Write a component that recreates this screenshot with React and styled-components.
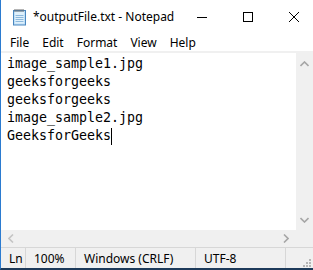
import React from 'react';
import styled, { createGlobalStyle } from 'styled-components';

const lines = [
  'image_sample1.jpg',
  'geeksforgeeks',
  'geeksforgeeks',
  'image_sample2.jpg',
  'GeeksforGeeks'
];

const menus = ['File', 'Edit', 'Format', 'View', 'Help'];

const statusCells = [
  { label: 'Ln', width: 25 },
  { label: '100%', width: 50 },
  { label: 'Windows (CRLF)', width: 120 },
  { label: 'UTF-8', width: 90 }
];

const NotepadIcon = () => (
  <svg width="16" height="18" viewBox="0 0 16 18">
    <rect x="1.5" y="2.5" width="12" height="14.5" fill="#bfe0f7" stroke="#4a87c0" />
    <rect x="3" y="4" width="9" height="11.5" fill="#dff0fb" />
    <path d="M3.5 7.5h8M3.5 9.5h8M3.5 11.5h8M3.5 13.5h8" stroke="#8cb8dc" />
    <path d="M3 1v3M5 1v3M7 1v3M9 1v3M11 1v3" stroke="#6a6a6a" />
  </svg>
);

const App = () => (
  <Window>
    <GlobalStyle />
    <TitleBar>
      <NotepadIcon />
      <Title>*outputFile.txt - Notepad</Title>
      <Controls>
        <CtrlButton>
          <svg width="10" height="10" viewBox="0 0 10 10">
            <path d="M0 5.5h10" stroke="#000" />
          </svg>
        </CtrlButton>
        <CtrlButton>
          <svg width="10" height="10" viewBox="0 0 10 10">
            <rect x="0.5" y="0.5" width="9" height="9" fill="none" stroke="#000" />
          </svg>
        </CtrlButton>
        <CtrlButton>
          <svg width="10" height="10" viewBox="0 0 10 10">
            <path d="M0 0L10 10M10 0L0 10" stroke="#000" />
          </svg>
        </CtrlButton>
      </Controls>
    </TitleBar>
    <MenuBar>
      {menus.map(m => <MenuItem key={m}>{m}</MenuItem>)}
    </MenuBar>
    <EditorFrame>
      <EditorRow>
        <TextArea>
          {lines.map((line, i) => (
            <Line key={i}>
              {line}
              {i === lines.length - 1 && <Caret />}
            </Line>
          ))}
        </TextArea>
        <VScroll>
          <Arrow>
            <svg width="9" height="6" viewBox="0 0 9 6">
              <path d="M0.5 5L4.5 1L8.5 5" stroke="#a6a6a6" strokeWidth="1.6" fill="none" />
            </svg>
          </Arrow>
          <Arrow>
            <svg width="9" height="6" viewBox="0 0 9 6">
              <path d="M0.5 1L4.5 5L8.5 1" stroke="#a6a6a6" strokeWidth="1.6" fill="none" />
            </svg>
          </Arrow>
        </VScroll>
      </EditorRow>
      <HScroll>
        <HArrow>
          <svg width="6" height="9" viewBox="0 0 6 9">
            <path d="M5 0.5L1 4.5L5 8.5" stroke="#c4c4c4" strokeWidth="1.6" fill="none" />
          </svg>
        </HArrow>
        <HArrow>
          <svg width="6" height="9" viewBox="0 0 6 9">
            <path d="M1 0.5L5 4.5L1 8.5" stroke="#a6a6a6" strokeWidth="1.6" fill="none" />
          </svg>
        </HArrow>
        <Corner />
      </HScroll>
    </EditorFrame>
    <StatusBar>
      {statusCells.map(c => (
        <StatusCell key={c.label} $width={c.width}>{c.label}</StatusCell>
      ))}
      <Grip>
        <svg width="10" height="10" viewBox="0 0 10 10" fill="#b5b5b5">
          <rect x="8" y="2" width="2" height="2" />
          <rect x="5" y="5" width="2" height="2" />
          <rect x="8" y="5" width="2" height="2" />
          <rect x="2" y="8" width="2" height="2" />
          <rect x="5" y="8" width="2" height="2" />
          <rect x="8" y="8" width="2" height="2" />
        </svg>
      </Grip>
    </StatusBar>
  </Window>
);

export default App;

const GlobalStyle = createGlobalStyle`
  body {
    margin: 0;
    background: #fff;
  }
`;

const Window = styled.div`
  width: 313px;
  height: 270px;
  box-sizing: border-box;
  display: flex;
  flex-direction: column;
  border-left: 1px solid #2b7bd0;
  border-bottom: 2px solid #1d3a5a;
  background: #fff;
  font-family: "Noto Sans", "Open Sans", sans-serif;
  color: #000;
  overflow: hidden;
`;

const TitleBar = styled.div`
  height: 33px;
  display: flex;
  align-items: center;
  padding-left: 11px;
  background: #fff;
`;

const Title = styled.span`
  font-size: 12px;
  margin-left: 5px;
  white-space: nowrap;
`;

const Controls = styled.div`
  margin-left: auto;
  margin-right: -4px;
  display: flex;
  height: 100%;
`;

const CtrlButton = styled.div`
  width: 46px;
  display: flex;
  align-items: center;
  justify-content: center;
`;

const MenuBar = styled.div`
  height: 18px;
  display: flex;
  align-items: center;
  padding-left: 2.5px;
`;

const MenuItem = styled.span`
  font-size: 12px;
  padding: 0 6.5px;
`;

const EditorFrame = styled.div`
  flex: 1;
  display: flex;
  flex-direction: column;
  border-top: 1px solid #f0f0f0;
`;

const EditorRow = styled.div`
  flex: 1;
  display: flex;
  border-top: 1px solid #f0f0f0;
`;

const TextArea = styled.div`
  flex: 1;
  padding: 2px 0 0 6px;
  font-family: "DejaVu Sans Mono", "Liberation Mono", monospace;
  font-size: 13.3px;
`;

const Line = styled.div`
  height: 18px;
  line-height: 18px;
  white-space: pre;
  display: flex;
  align-items: center;
`;

const Caret = styled.span`
  display: inline-block;
  width: 1px;
  height: 17px;
  background: #000;
`;

const VScroll = styled.div`
  width: 17px;
  background: #f0f0f0;
  display: flex;
  flex-direction: column;
  justify-content: space-between;
  align-items: center;
  padding: 8px 0 7px;
`;

const Arrow = styled.div`
  display: flex;
`;

const HScroll = styled.div`
  height: 17px;
  display: flex;
  align-items: center;
  justify-content: space-between;
  background: #f0f0f0;
  padding-left: 7px;
`;

const HArrow = styled.div`
  display: flex;
  &:nth-child(2) {
    margin-left: auto;
    margin-right: 7px;
  }
`;

const Corner = styled.div`
  width: 17px;
`;

const StatusBar = styled.div`
  height: 20px;
  display: flex;
  align-items: center;
  background: #f0f0f0;
  border-top: 1px solid #d7d7d7;
  font-size: 12px;
  position: relative;
`;

const StatusCell = styled.div`
  width: ${p => p.$width}px;
  height: 100%;
  box-sizing: border-box;
  padding-left: 8px;
  display: flex;
  align-items: center;
  border-right: 1px solid #d7d7d7;
  white-space: nowrap;
  &:last-of-type {
    border-right: none;
  }
`;

const Grip = styled.div`
  position: absolute;
  right: 2px;
  bottom: 1px;
  display: flex;
`;
